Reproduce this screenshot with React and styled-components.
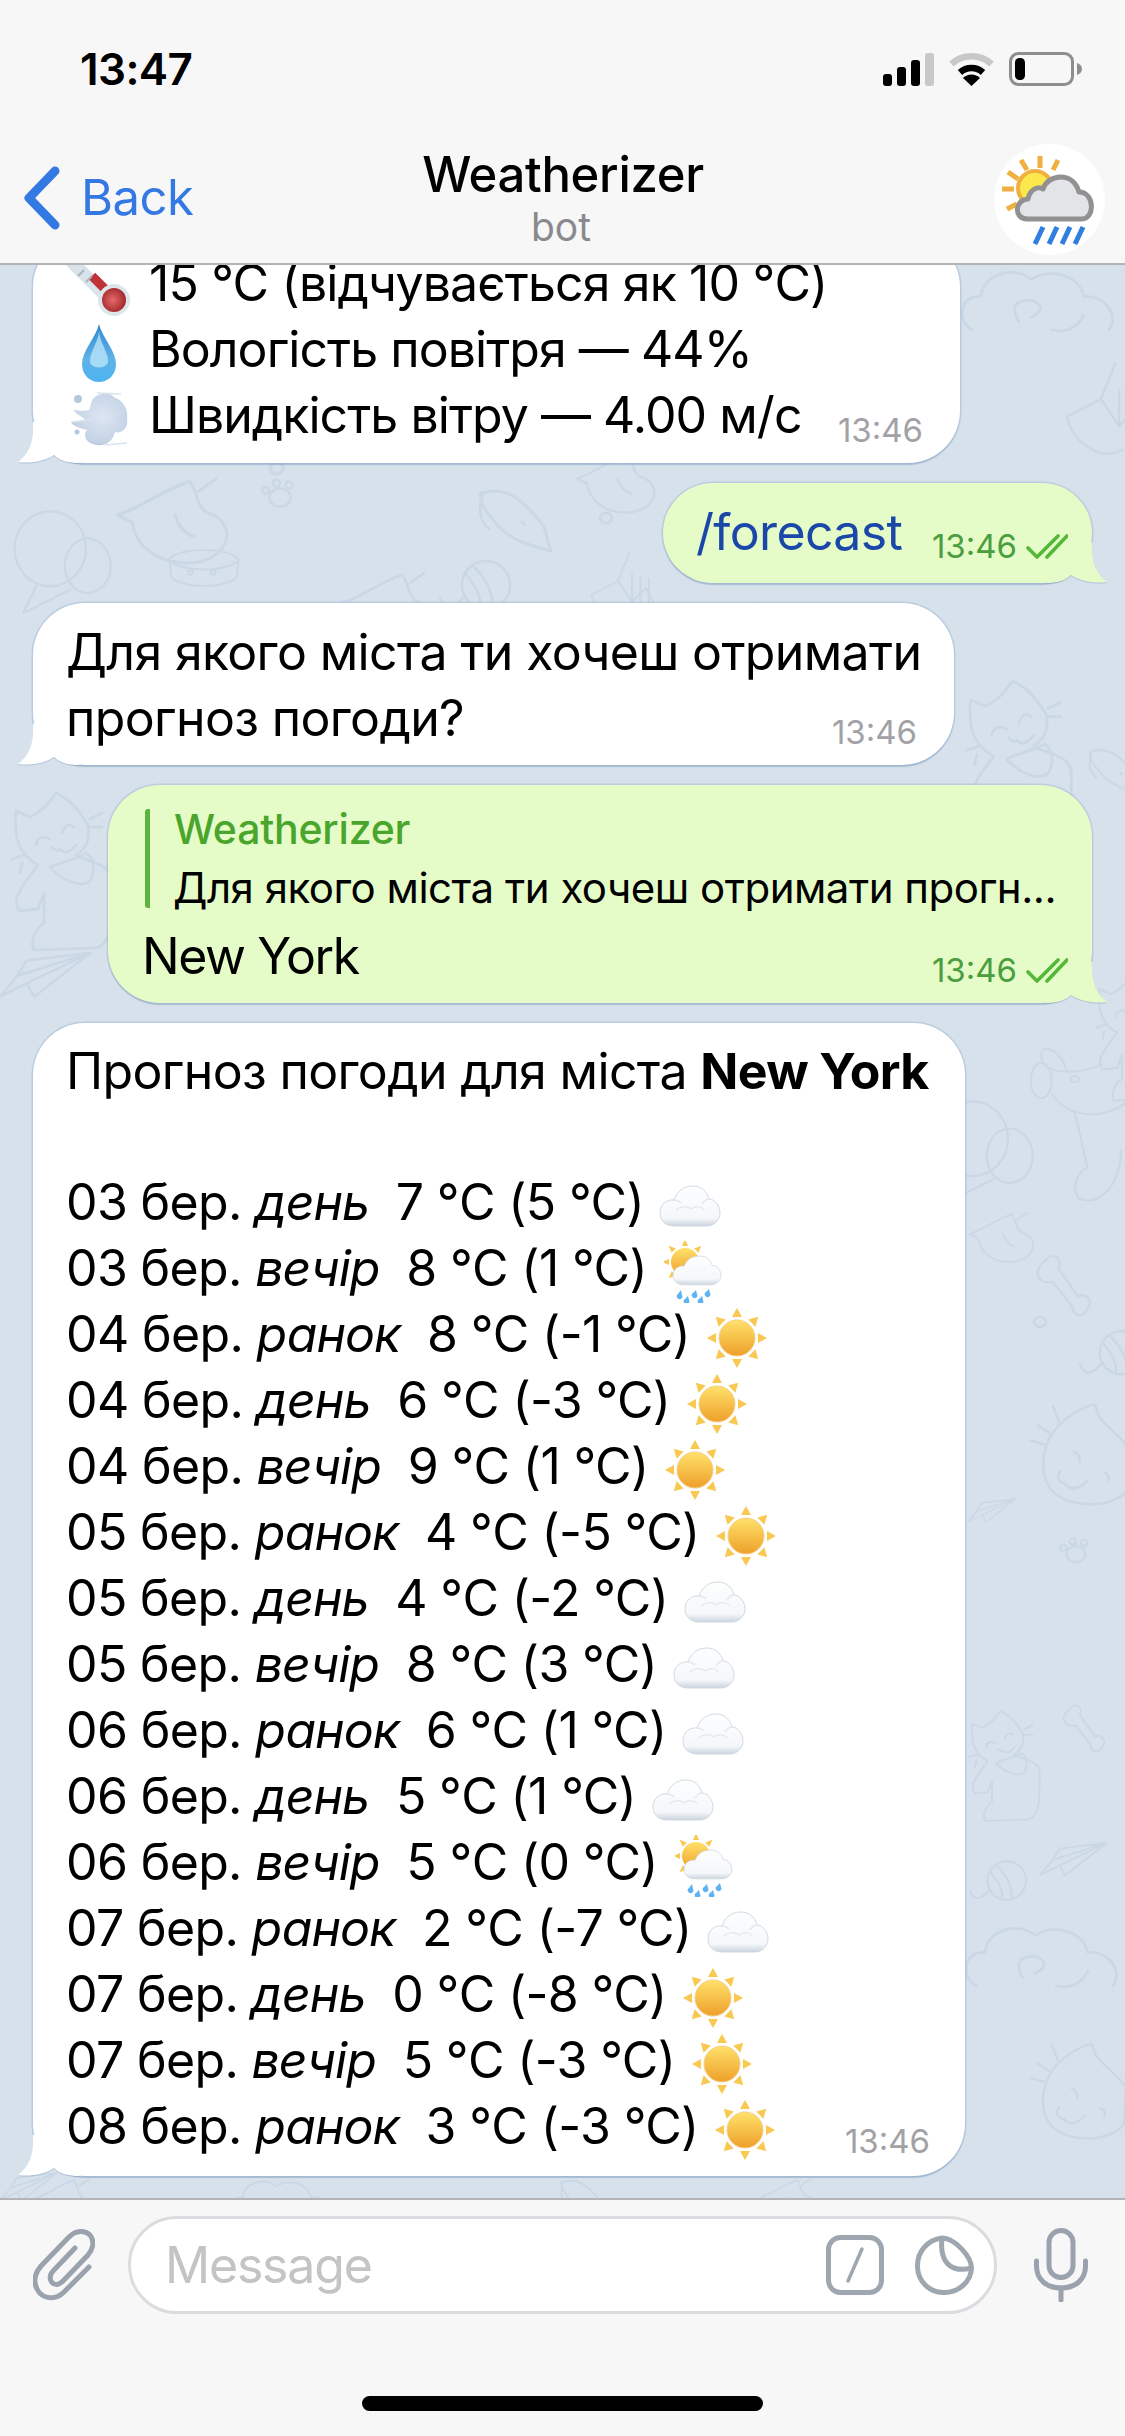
import React from "react";
import styled, { createGlobalStyle } from "styled-components";

const Global = createGlobalStyle`
  html, body { margin: 0; padding: 0; background: #f7f7f7; }
  * { box-sizing: border-box; }
`;
const FONT = `Inter, "Liberation Sans", sans-serif`;

const Screen = styled.div`
  width: 1125px; height: 2436px; display: flex; flex-direction: column; overflow: hidden;
  font-family: ${FONT}; color: #000; background: #d6e1ec; position: relative;
`;
const Header = styled.header`
  height: 265px; flex: none; background: #f7f7f7; border-bottom: 2px solid #b4b4b6; position: relative; z-index: 2;
`;
const StatusBar = styled.div`
  height: 132px; display: flex; justify-content: space-between; align-items: flex-start; padding: 42px 43px 0 80px;
`;
const Clock = styled.div`font-size: 44px; line-height: 54px; font-weight: 600; letter-spacing: -0.6px;`;
const StatusIcons = styled.div`display: flex; align-items: center; gap: 15px; padding-top: 10px;`;
const NavBar = styled.nav`
  height: 131px; display: grid; grid-template-columns: 1fr auto 1fr; align-items: flex-start; padding: 0 20px 0 24px;
`;
const BackLink = styled.div`
  display: flex; align-items: center; gap: 21px; color: #3478e4; font-size: 49px; line-height: 60px; margin-top: 34px; letter-spacing: -0.5px;
`;
const TitleBlock = styled.div`display: flex; flex-direction: column; align-items: center; padding-top: 13px; margin-right: 3px;`;
const Title = styled.div`font-size: 49px; line-height: 60px; font-weight: 500; letter-spacing: -0.3px;`;
const Subtitle = styled.div`font-size: 39px; line-height: 44px; color: #8a8a8e; margin: 0 4px 0 0;`;
const AvatarWrap = styled.div`justify-self: end; margin-top: 12px; width: 111px; height: 111px; border-radius: 50%; background: #fff; display: flex; align-items: center; justify-content: center;`;

const Messages = styled.main`
  flex: 1; min-height: 0; position: relative; overflow: hidden; display: flex; flex-direction: column;
  justify-content: flex-end; gap: 20px; padding: 0 33px 22px;
`;
const Wallpaper = styled.svg`
  position: absolute; left: 0; bottom: 0; width: 1125px; height: 1935px; fill: none; stroke: #cad7e5; stroke-width: 2.6;
  stroke-linecap: round; stroke-linejoin: round;
`;
const Bubble = styled.div`
  position: relative; flex: none; width: ${p => p.$w}px; align-self: ${p => (p.$out ? "flex-end" : "flex-start")};
  background: ${p => (p.$out ? "#e5fcc8" : "#fff")}; border-radius: 52px; padding: ${p => p.$pad || "15px 37px 15px 33px"};
  box-shadow: 0 0 0 1.5px rgba(150, 175, 205, 0.4), 0 2px 1px rgba(140, 165, 195, 0.55);
`;
const TailBox = styled.svg`
  position: absolute; bottom: -1px; width: 62px; height: 42px; overflow: visible;
  filter: drop-shadow(0 1px 0 rgba(140, 165, 195, 0.5));
  ${p => (p.$out ? "right: -16px; transform: scaleX(-1);" : "left: -16px;")}
`;
const Line = styled.div`
  position: relative; height: 66px; padding-top: 2px; font-size: 50px; line-height: 64px; white-space: pre; letter-spacing: ${p => p.$ls || "-0.65px"};
  display: flex; align-items: center; justify-content: ${p => (p.$between ? "space-between" : "flex-start")};
`;
const LineText = styled.span`white-space: pre; display: block; color: ${p => p.$color || "inherit"};`;
const Em = styled.i`font-style: italic; letter-spacing: -1px;`;
const Strong = styled.b`font-weight: 700;`;
const Meta = styled.span`
  display: inline-flex; align-items: center; gap: 9px; align-self: flex-end; font-size: 33px; line-height: 36px; letter-spacing: 0;
  color: ${p => (p.$out ? "#4b9e3f" : "#a2a2a6")};
`;
const EmojiSlot = styled.span`
  display: inline-flex; width: ${p => p.$w || 62}px; height: 60px; margin-left: ${p => p.$ml || 0}px; margin-right: ${p => p.$mr || 0}px;
  align-items: center; justify-content: center; flex: none; vertical-align: middle;
`;
const Reply = styled.div`
  position: relative; display: flex; flex-direction: column; border-left: 5px solid #5cb33f; border-radius: 3px; padding-left: 24px; height: 99px; justify-content: space-between;
  margin: 9px 0 14px 3px;
`;
const ReplyTitle = styled.div`font-size: 41px; line-height: 40px; color: #49a52b; letter-spacing: -0.2px; font-weight: 500;`;
const ReplyText = styled.div`font-size: 42px; line-height: 40px; white-space: pre; letter-spacing: -0.5px; margin-left: -1px;`;

const Footer = styled.footer`
  height: 238px; flex: none; background: #f7f7f7; border-top: 2px solid #b4b4b6; padding-top: 16px; position: relative; z-index: 2;
`;
const InputRow = styled.div`display: flex; align-items: center; padding: 0 0 0 33px;`;
const InputPill = styled.div`
  width: 869px; height: 98px; border: 3px solid #dcdce0; border-radius: 49px; background: #fff; margin: 0 37px 0 33px;
  display: flex; align-items: center; justify-content: space-between; padding: 0 20px 0 34px; flex: none;
`;
const Placeholder = styled.span`font-size: 50px; color: #c4c4c7; letter-spacing: -1.2px;`;
const InputIcons = styled.span`display: flex; gap: 31px; align-items: center;`;
const HomeBarWrap = styled.div`display: flex; justify-content: center; padding-top: 82px;`;
const HomeBar = styled.div`width: 401px; height: 15px; background: #000; border-radius: 8px;`;

const Signal = () => (
  <svg width="51" height="33" viewBox="0 0 51 33">
    <rect x="0" y="21" width="9" height="12" rx="3" fill="#000" />
    <rect x="14" y="14" width="9" height="19" rx="3" fill="#000" />
    <rect x="28" y="7" width="9" height="26" rx="3" fill="#000" />
    <rect x="42" y="0" width="9" height="33" rx="3" fill="#c8c8c8" />
  </svg>
);
const Wifi = () => (
  <svg width="45" height="33" viewBox="0 0 45 33" fill="none">
    <path d="M2.5 11 A30 30 0 0 1 42.5 11" stroke="#c8c8c8" strokeWidth="6.5" />
    <path d="M11 19.5 A17 17 0 0 1 34 19.5" stroke="#000" strokeWidth="6.5" />
    <path d="M22.5 33 L14 25 A12 12 0 0 1 31 25 Z" fill="#000" />
  </svg>
);
const Battery = () => (
  <svg width="73" height="34" viewBox="0 0 73 34" fill="none">
    <rect x="1.5" y="1.5" width="62" height="31" rx="8" stroke="#8e8e8e" strokeWidth="3" />
    <rect x="6" y="6" width="10" height="22" rx="4.5" fill="#000" />
    <path d="M68 11 C71 12 73 14 73 17 C73 20 71 22 68 23 Z" fill="#8e8e8e" />
  </svg>
);
const Chevron = () => (
  <svg width="36" height="64" viewBox="0 0 36 64" fill="none" style={{ flex: "none" }}>
    <path d="M31 5 L5 32 L31 59" stroke="#3478e4" strokeWidth="9" strokeLinecap="round" strokeLinejoin="round" />
  </svg>
);
const Avatar = () => (
  <svg width="100" height="92" viewBox="0 0 100 92" fill="none">
    <g stroke="#f0b040" strokeWidth="5">
      <path d="M40 2v12M21 6l6 10M8 18l10 7M2 35h12M7 55l10-5M58 6l-5 10" />
    </g>
    <circle cx="35" cy="34" r="17" fill="#fbe84c" stroke="#f0b040" strokeWidth="4" />
    <path d="M27 65 C14 65 14 46 28 45 C30 35 38 32 43 35 C48 20 73 17 79 38 C95 38 95 65 82 65 Z" fill="#e2e4e8" stroke="#919191" strokeWidth="5" strokeLinejoin="round" />
    <path d="M38 90l8-17M52 90l8-17M65 90l8-17M78 90l8-17" stroke="#2f7fe0" strokeWidth="5" transform="translate(-3 0)" />
  </svg>
);

const SunRays = ({ cx, cy, r1, r2, w }) => (
  <g fill="#f8c850">
    {[0, 45, 90, 135, 180, 225, 270, 315].map(a => (
      <path key={a} d={`M${cx - w / 2} ${cy - r1} L${cx} ${cy - r2} L${cx + w / 2} ${cy - r1} Z`} transform={`rotate(${a} ${cx} ${cy})`} />
    ))}
  </g>
);
const Sun = () => (
  <svg width="62" height="60" viewBox="0 0 62 60">
    <SunRays cx={31} cy={30} r1={21} r2={30} w={10} />
    <circle cx="31" cy="30" r="18" fill="url(#sunG)" stroke="#f6cf8c" strokeWidth="1" />
  </svg>
);
const CLOUD = "M14 40 C4 40 0 33 0 27 C0 18 7 13 14 14 C17 5 24 0 33 0 C41 0 47 5 49 13 C55 13 60 20 60 27 C60 34 54 40 47 40 Z";
const Cloud = () => (
  <svg width="62" height="44" viewBox="-1 -1 62 42">
    <path d={CLOUD} fill="url(#cloudG)" stroke="#ccd5df" strokeWidth=".9" />
    <path d="M16 24 C20 20 28 20 31 23 C35 20 42 20 44 24 M14 14 C16 14 19 15 21 17 M49 13 C47 13 44 15 42 18" fill="none" stroke="#e4e9ef" strokeWidth="1.5" />
  </svg>
);
const SunRain = () => (
  <svg width="58" height="62" viewBox="0 0 58 62">
    <SunRays cx={21} cy={21} r1={16} r2={23} w={6} />
    <circle cx="21" cy="21" r="14" fill="url(#sunG)" />
    <g transform="translate(9 15) scale(.8 .72)"><path d={CLOUD} fill="url(#cloudG)" stroke="#ccd5df" /></g>
    <g fill="#5eb4f2">
      <path d="M17 49 l-3 4 a2.8 2.8 0 1 0 4 1 Z" />
      <path d="M24 55 l-3 3 a2.8 2.8 0 1 0 4 1 Z" />
      <path d="M32 49 l-3 3 a2.8 2.8 0 1 0 4 1 Z" />
      <path d="M38 55 l-3 3 a2.8 2.8 0 1 0 4 1 Z" />
      <path d="M45 48 l-3 3 a2.8 2.8 0 1 0 4 1 Z" />
    </g>
  </svg>
);
const Thermometer = () => (
  <svg width="62" height="62" viewBox="0 0 62 62" style={{ overflow: "visible" }}>
    <path d="M4 6 L38 40" stroke="#d8e3ea" strokeWidth="13" strokeLinecap="round" />
    <path d="M24 20 L40 36" stroke="#bf3236" strokeWidth="9" />
    <path d="M10 20 L16 14 M18 26 L24 20" stroke="#a9b6bf" strokeWidth="2" />
    <circle cx="46" cy="44" r="16" fill="#dde6ea" />
    <circle cx="46" cy="44" r="12" fill="url(#bulbG)" />
  </svg>
);
const Droplet = () => (
  <svg width="36" height="60" viewBox="0 0 36 60">
    <path d="M18 1 C21 14 35 28 35 41 C35 52 27 59 18 59 C9 59 1 52 1 41 C1 28 15 14 18 1 Z" fill="url(#dropG)" />
    <path d="M18 8 C19 20 28 30 27 40 C23 46 13 46 9 40 C8 30 17 20 18 8 Z" fill="#bfe8f9" opacity=".75" />
  </svg>
);
const Wind = () => (
  <svg width="60" height="58" viewBox="0 0 60 58">
    <path d="M22 14 C24 3 40 0 46 8 C54 10 60 20 58 30 C60 38 52 44 46 42 C44 52 34 58 24 54 C16 52 14 44 18 40 C10 38 4 36 2 32 C8 32 12 31 16 29 C10 26 6 22 4 20 C10 21 16 21 20 20 Z" fill="url(#windG)" />
    <path d="M28 3 L52 4 M36 55 L58 53 M2 32 L22 30" stroke="#dbe4ee" strokeWidth="1.5" />
    <circle cx="9" cy="9" r="4" fill="#b6c8dc" />
    <circle cx="8" cy="42" r="2.5" fill="#b6c8dc" />
  </svg>
);
const EmojiDefs = () => (
  <svg width="0" height="0" style={{ position: "absolute" }}>
    <defs>
      <linearGradient id="sunG" x1="0" y1="0" x2="0" y2="1"><stop offset="0" stopColor="#ffe16a" /><stop offset="1" stopColor="#eea02a" /></linearGradient>
      <linearGradient id="cloudG" x1="0" y1="0" x2="0" y2="1"><stop offset="0" stopColor="#fdfefe" /><stop offset=".8" stopColor="#f5f7fa" /><stop offset="1" stopColor="#cbd5e0" /></linearGradient>
      <radialGradient id="bulbG" cx=".45" cy=".5" r=".6"><stop offset="0" stopColor="#e76a6a" /><stop offset="1" stopColor="#9c2226" /></radialGradient>
      <linearGradient id="dropG" x1="0" y1="0" x2="0" y2="1"><stop offset="0" stopColor="#2f88d0" /><stop offset=".6" stopColor="#5fb2e8" /><stop offset="1" stopColor="#4cb4f0" /></linearGradient>
      <radialGradient id="windG" cx=".55" cy=".45" r=".7"><stop offset="0" stopColor="#dde6f2" /><stop offset=".7" stopColor="#c5d3e6" /><stop offset="1" stopColor="#98aac4" /></radialGradient>
    </defs>
  </svg>
);
const Ticks = () => (
  <svg width="42" height="25" viewBox="0 0 42 25" fill="none" stroke="#53b83a" strokeWidth="3.6" strokeLinecap="round" strokeLinejoin="round">
    <path d="M2 14 L11 23 L32 2" />
    <path d="M21 23 L41 2" />
  </svg>
);
const Tail = ({ out }) => (
  <TailBox $out={out} viewBox="0 0 62 42">
    <path d="M16 0 C17 20 12 32 1 40 C14 42 28 39 37 33 C43 39 52 41 62 41 L62 0 Z" fill={out ? "#e5fcc8" : "#fff"} />
  </TailBox>
);

const Clip = () => (
  <svg width="62" height="72" viewBox="0 0 62 72" fill="none" stroke="#9aa2ad" strokeWidth="5" strokeLinecap="round" style={{ flex: "none" }}>
    <path d="M56 38 L31 63 C22 72 9 70 4 60 C0 52 2 44 8 37 L36 8 C43 1 52 1 57 6 C62 12 60 20 55 26 L30 52 C25 57 20 56 18 52 C16 48 18 44 21 41 L42 19" />
  </svg>
);
const CommandIcon = () => (
  <svg width="58" height="60" viewBox="0 0 58 60" fill="none" stroke="#9ea6b0" strokeWidth="5" strokeLinecap="round">
    <rect x="2.5" y="2.5" width="53" height="55" rx="12" />
    <path d="M36 14 L22 46" strokeWidth="3.5" />
  </svg>
);
const StickerIcon = () => (
  <svg width="59" height="60" viewBox="0 0 59 60" fill="none" stroke="#9ea6b0" strokeWidth="5" strokeLinejoin="round">
    <path d="M27 3 C12 5 2 17 2.5 32 C3 47 15 58 30 57.5 C45 57 56 46 56.5 33 C56.5 22 40 3 27 3 Z" />
    <path d="M27 3 C26 12 27 24 34 30 C40 35 49 35 56.5 33" />
  </svg>
);
const Mic = () => (
  <svg width="54" height="74" viewBox="0 0 54 74" fill="none" stroke="#9aa2ad" strokeWidth="5" strokeLinecap="round" style={{ flex: "none" }}>
    <rect x="15" y="2.5" width="24" height="47" rx="12" />
    <path d="M2.5 33 V38 C2.5 52 13 60 27 60 C41 60 51.5 52 51.5 38 V33" />
    <path d="M27 60 V72" />
  </svg>
);

/* wallpaper doodles */
const Bone = () => <path d="M14 8 C22 -2 34 6 28 17 L50 48 C60 44 68 54 60 62 C58 72 44 72 44 60 L22 32 C10 36 -4 24 14 8 Z" />;
const Balloons = () => (
  <g>
    <ellipse cx="38" cy="42" rx="42" ry="44" />
    <ellipse cx="82" cy="62" rx="27" ry="32" />
    <path d="M22 85 L6 118 M62 90 L6 118" />
  </g>
);
const Plane = () => <path d="M95 0 L28 8 L18 24 L0 46 L28 32 L36 46 L95 0 M28 8 L95 0 L18 24 M28 32 L95 0" />;
const FullCat = () => (
  <g>
    <path d="M12 58 L26 64 Q40 58 52 40 Q70 48 84 72 Q88 92 72 102 C80 108 108 110 108 128 C108 160 110 190 92 195 L30 197 C26 190 30 176 40 170 L40 140 L34 156 L16 158 C8 150 12 140 34 112 C12 100 10 80 12 58 Z" />
    <path d="M46 86 q-12 -6 -14 6 M70 74 q-8 -6 -12 6 M48 94 q6 6 8 2 q6 8 16 -4" />
    <path d="M46 114 C56 126 76 136 86 128 C92 118 90 104 82 100 C74 106 60 108 46 114 Z" />
    <path d="M86 66 L98 60 M86 74 L98 74 M20 102 L8 106 M18 110 L16 120" />
  </g>
);
const CatHead = () => (
  <g>
    <path d="M14 48 C24 28 50 14 62 12 L66 24 C74 36 90 46 100 60 L98 100 C86 120 40 124 18 104 C6 92 4 70 14 48 Z" />
    <path d="M24 30 L18 14 M14 42 L2 34 M8 54 L-6 50" />
    <path d="M40 62 q6 2 6 10 M72 84 q6 2 4 8 M30 96 q12 10 24 -4 M26 82 q-8 10 6 14" />
  </g>
);
const DogHead = () => (
  <g>
    <ellipse cx="14" cy="42" rx="13" ry="22" />
    <path d="M18 22 C30 34 60 34 90 22 M28 60 C50 90 90 90 120 70 M55 80 C64 110 66 130 72 150 C60 156 50 176 62 190 C86 198 112 176 114 130" />
    <path d="M16 20 Q10 2 22 2 Q40 8 46 30" />
    <ellipse cx="56" cy="40" rx="5" ry="4" />
  </g>
);
const Yarn = () => (
  <g>
    <circle cx="46" cy="22" r="24" />
    <path d="M26 12 Q42 30 40 44 M34 4 Q54 24 52 44 M24 34 Q6 54 0 34" />
  </g>
);
const Ring = () => <ellipse cx="6" cy="5" rx="6" ry="5" />;
const Paw = () => (
  <g>
    <ellipse cx="20" cy="14" rx="12" ry="10" />
    <circle cx="4" cy="6" r="4" /><circle cx="16" cy="-2" r="4" /><circle cx="30" cy="0" r="4" />
  </g>
);
const PuffCloud = () => (
  <path d="M10 60 C-6 52 -2 26 18 28 C20 6 50 -2 66 12 C84 0 112 8 116 28 C136 26 150 46 140 60 M54 52 q-12 -22 14 -20 q14 8 -2 16 M86 60 q20 4 30 -14" />
);
const Bird = () => (
  <path d="M2 30 C22 24 42 8 62 2 C70 10 66 26 82 30 C104 42 92 70 60 70 C34 70 18 56 14 36 Z M50 30 q4 14 16 18 M70 10 L84 0" />
);
const Mouse = () => <path d="M2 6 C24 -2 40 10 60 36 L66 58 C50 54 26 48 14 30 C6 22 2 14 2 6 Z M40 32 l2 2 M4 8 q-6 20 6 30" />;
const Bowl = () => (
  <g>
    <path d="M2 16 C14 0 80 0 94 16 L92 40 C78 56 18 56 4 40 Z M2 18 C18 34 78 34 94 18" />
    <circle cx="30" cy="34" r="3" /><circle cx="60" cy="34" r="3" />
  </g>
);
const Fish = () => (
  <g>
    <path d="M2 60 L40 40 L56 0 M40 40 L60 70 L80 50 L90 70 M2 60 C10 90 40 110 64 96" />
    <path d="M60 30 v40 M72 34 v42 M84 36 v44" />
  </g>
);

const DOODLES = [
  [PuffCloud, 962, 4, 1.05], [Fish, 1065, 100, 0.9], [Bird, 115, 216, 1.2], [Paw, 262, 222, 0.9], [Mouse, 478, 224, 1.1],
  [Balloons, 18, 250, 0.85], [Bowl, 168, 284, 0.75], [Bird, 340, 310, 1], [Yarn, 440, 300, 1], [Bird, 575, 190, 0.85], [Fish, 590, 290, 0.7],
  [FullCat, 958, 376, 1.05], [Ring, 270, 200, 1.1], [Ring, 1000, 270, 1],
  [FullCat, 4, 490, 1], [Plane, 0, 690, 0.95], [DogHead, 1030, 784, 0.8], [Balloons, 940, 840, 0.85],
  [Bone, 1033, 990, 0.9], [Yarn, 1080, 1070, 0.9], [CatHead, 1036, 1130, 0.95], [Plane, 968, 1236, 0.5], [Ring, 1034, 1054, 1],
  [Bird, 968, 950, 0.7], [Paw, 1060, 1280, 0.8], [FullCat, 964, 1420, 0.7], [Bone, 1060, 1440, 0.7],
  [Plane, 1040, 1580, 0.7], [Yarn, 970, 1600, 0.8], [PuffCloud, 966, 1660, 1.05], [CatHead, 1036, 1770, 0.9],
  [Bird, 30, 1916, 0.7], [PuffCloud, 230, 1915, 0.7], [Mouse, 560, 1915, 0.7], [Bird, 760, 1916, 0.6], [Ring, 600, 250, 1],
  [Plane, 0, 1910, 0.6],
  [Bowl, 690, 270, 0.7], [Ring, 750, 340, 1], [FullCat, 1090, 680, 0.8], [Mouse, 1088, 484, 0.8]
];

const FORECAST = [
  ["03", "день", "7 °C (5 °C)", "cloud"],
  ["03", "вечір", "8 °C (1 °C)", "rain"],
  ["04", "ранок", "8 °C (-1 °C)", "sun"],
  ["04", "день", "6 °C (-3 °C)", "sun"],
  ["04", "вечір", "9 °C (1 °C)", "sun"],
  ["05", "ранок", "4 °C (-5 °C)", "sun"],
  ["05", "день", "4 °C (-2 °C)", "cloud"],
  ["05", "вечір", "8 °C (3 °C)", "cloud"],
  ["06", "ранок", "6 °C (1 °C)", "cloud"],
  ["06", "день", "5 °C (1 °C)", "cloud"],
  ["06", "вечір", "5 °C (0 °C)", "rain"],
  ["07", "ранок", "2 °C (-7 °C)", "cloud"],
  ["07", "день", "0 °C (-8 °C)", "sun"],
  ["07", "вечір", "5 °C (-3 °C)", "sun"]
];
const EMOJI = { cloud: Cloud, rain: SunRain, sun: Sun };

const ForecastLine = ({ d, part, temp, icon }) => {
  const Icon = EMOJI[icon];
  return (
    <LineText>
      {d} бер. <Em>{part}</Em>{"  "}{temp}{" "}
      <EmojiSlot $ml={2}><Icon /></EmojiSlot>
    </LineText>
  );
};

export default function App() {
  return (
    <Screen>
      <Global />
      <EmojiDefs />
      <Header>
        <StatusBar>
          <Clock>13:47</Clock>
          <StatusIcons><Signal /><Wifi /><Battery /></StatusIcons>
        </StatusBar>
        <NavBar>
          <BackLink><Chevron />Back</BackLink>
          <TitleBlock>
            <Title>Weatherizer</Title>
            <Subtitle>bot</Subtitle>
          </TitleBlock>
          <AvatarWrap><Avatar /></AvatarWrap>
        </NavBar>
      </Header>
      <Messages>
        <Wallpaper viewBox="0 0 1125 1935" aria-hidden="true">
          {DOODLES.map(([D, x, y, s], i) => (
            <g key={i} transform={`translate(${x} ${y}) scale(${s})`}><D /></g>
          ))}
        </Wallpaper>
        <Bubble $w={927}>
          <Tail />
          <Line $ls="-0.85px"><LineText><EmojiSlot $w={66} $mr={17}><Thermometer /></EmojiSlot>15 °C (відчувається як 10 °C)</LineText></Line>
          <Line $ls="-0.95px"><LineText><EmojiSlot $w={66} $mr={17}><Droplet /></EmojiSlot>Вологість повітря — 44%</LineText></Line>
          <Line $between $ls="-0.95px">
            <LineText><EmojiSlot $w={66} $mr={17}><Wind /></EmojiSlot>Швидкість вітру — 4.00 м/с</LineText>
            <Meta>13:46</Meta>
          </Line>
        </Bubble>
        <Bubble $w={429} $out $pad="15px 24px 19px 33px">
          <Tail out />
          <Line $between>
            <LineText $color="#1b48a8">/forecast</LineText>
            <Meta $out>13:46<Ticks /></Meta>
          </Line>
        </Bubble>
        <Bubble $w={921}>
          <Tail />
          <Line>Для якого міста ти хочеш отримати</Line>
          <Line $between><LineText>прогноз погоди?</LineText><Meta>13:46</Meta></Line>
        </Bubble>
        <Bubble $w={984} $out $pad="15px 24px 15px 34px">
          <Tail out />
          <Reply>
            <ReplyTitle>Weatherizer</ReplyTitle>
            <ReplyText>Для якого міста ти хочеш отримати прогн...</ReplyText>
          </Reply>
          <Line $between $ls="-1.4px"><LineText>New York</LineText><Meta $out>13:46<Ticks /></Meta></Line>
        </Bubble>
        <Bubble $w={932} $pad="14px 35px 17px 33px">
          <Tail />
          <Line><LineText>Прогноз погоди для міста <Strong>New York</Strong></LineText></Line>
          <Line />
          {FORECAST.map(([d, part, temp, icon], i) => (
            <Line key={i}><ForecastLine d={d} part={part} temp={temp} icon={icon} /></Line>
          ))}
          <Line $between>
            <ForecastLine d="08" part="ранок" temp="3 °C (-3 °C)" icon="sun" />
            <Meta>13:46</Meta>
          </Line>
        </Bubble>
      </Messages>
      <Footer>
        <InputRow>
          <Clip />
          <InputPill>
            <Placeholder>Message</Placeholder>
            <InputIcons><CommandIcon /><StickerIcon /></InputIcons>
          </InputPill>
          <Mic />
        </InputRow>
        <HomeBarWrap><HomeBar /></HomeBarWrap>
      </Footer>
    </Screen>
  );
}
